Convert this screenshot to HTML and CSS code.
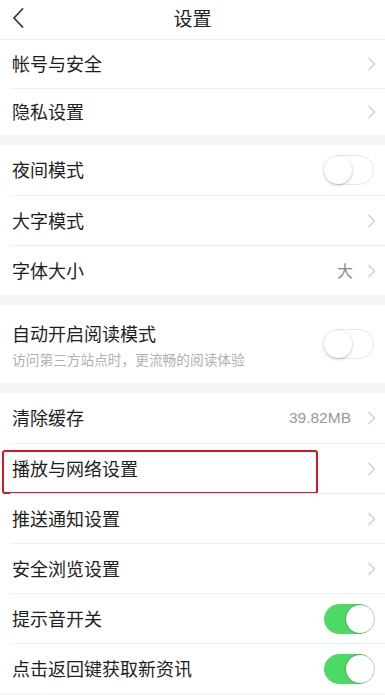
FILE: index.html
```html
<!DOCTYPE html>
<html lang="zh-CN">
<head>
<meta charset="utf-8">
<title>设置</title>
<link rel="stylesheet" href="styles.css">
</head>
<body>
<div class="page">
  <header class="header">
    <span class="back">
      <svg width="12" height="20" viewBox="0 0 12 20"><path d="M10.5 1 L2 10 L10.5 19" fill="none" stroke="#333" stroke-width="1.8" stroke-linecap="round" stroke-linejoin="round"/></svg>
    </span>
    <h1 class="title">设置</h1>
    <span></span>
  </header>

  <section class="group">
    <div class="row row-short"><span class="label">帐号与安全</span><span class="chev"><svg width="9" height="14" viewBox="0 0 9 14"><path d="M1.5 1 L7.5 7 L1.5 13" fill="none" stroke="#cdcdcd" stroke-width="1.3"/></svg></span></div>
    <div class="row row-short"><span class="label">隐私设置</span><span class="chev"><svg width="9" height="14" viewBox="0 0 9 14"><path d="M1.5 1 L7.5 7 L1.5 13" fill="none" stroke="#cdcdcd" stroke-width="1.3"/></svg></span></div>
  </section>

  <section class="group">
    <div class="row"><span class="label">夜间模式</span><span class="switch"><span class="knob"></span></span></div>
    <div class="row"><span class="label">大字模式</span><span class="chev"><svg width="9" height="14" viewBox="0 0 9 14"><path d="M1.5 1 L7.5 7 L1.5 13" fill="none" stroke="#cdcdcd" stroke-width="1.3"/></svg></span></div>
    <div class="row"><span class="label">字体大小</span><span class="value value-cn">大</span><span class="chev"><svg width="9" height="14" viewBox="0 0 9 14"><path d="M1.5 1 L7.5 7 L1.5 13" fill="none" stroke="#cdcdcd" stroke-width="1.3"/></svg></span></div>
  </section>

  <section class="group">
    <div class="row row-tall">
      <div class="labels">
        <span class="label">自动开启阅读模式</span>
        <span class="sub">访问第三方站点时，更流畅的阅读体验</span>
      </div>
      <span class="switch"><span class="knob"></span></span>
    </div>
  </section>

  <section class="group">
    <div class="row"><span class="label">清除缓存</span><span class="value">39.82MB</span><span class="chev"><svg width="9" height="14" viewBox="0 0 9 14"><path d="M1.5 1 L7.5 7 L1.5 13" fill="none" stroke="#cdcdcd" stroke-width="1.3"/></svg></span></div>
    <div class="row marked"><span class="label">播放与网络设置</span><span class="chev"><svg width="9" height="14" viewBox="0 0 9 14"><path d="M1.5 1 L7.5 7 L1.5 13" fill="none" stroke="#cdcdcd" stroke-width="1.3"/></svg></span><span class="highlight"></span></div>
    <div class="row"><span class="label">推送通知设置</span><span class="chev"><svg width="9" height="14" viewBox="0 0 9 14"><path d="M1.5 1 L7.5 7 L1.5 13" fill="none" stroke="#cdcdcd" stroke-width="1.3"/></svg></span></div>
    <div class="row"><span class="label">安全浏览设置</span><span class="chev"><svg width="9" height="14" viewBox="0 0 9 14"><path d="M1.5 1 L7.5 7 L1.5 13" fill="none" stroke="#cdcdcd" stroke-width="1.3"/></svg></span></div>
    <div class="row"><span class="label">提示音开关</span><span class="switch on"><span class="knob"></span></span></div>
    <div class="row"><span class="label">点击返回键获取新资讯</span><span class="switch on"><span class="knob"></span></span></div>
  </section>
</div>
</body>
</html>
```

FILE: styles.css
```css
html, body {
  margin: 0;
  padding: 0;
}
body {
  background: #f5f5f5;
  font-family: "Noto Sans CJK SC", "Liberation Sans", sans-serif;
  color: #222;
}
.page {
  width: 385px;
  height: 695px;
  overflow: hidden;
  display: flex;
  flex-direction: column;
  gap: 10px;
}
.header {
  height: 40px;
  box-sizing: border-box;
  background: #fff;
  border-bottom: 1px solid #ececec;
  display: grid;
  grid-template-columns: 1fr auto 1fr;
  align-items: center;
  margin-bottom: -10px;
}
.back {
  display: flex;
  align-items: center;
  padding-left: 12px;
  padding-bottom: 3px;
}
.title {
  margin: 0;
  font-size: 19px;
  font-weight: 400;
  line-height: 1;
  color: #222;
  padding-bottom: 4px;
}
.group {
  background: #fff;
  display: flex;
  flex-direction: column;
}
.row {
  position: relative;
  height: 50px;
  box-sizing: border-box;
  margin-left: 10px;
  padding: 0 9px 0 2px;
  display: flex;
  align-items: center;
}
.row + .row {
  border-top: 1px solid #efefef;
}
.row-short {
  height: 47.5px;
}
.row-tall {
  height: 78px;
}
.label {
  font-size: 18px;
  line-height: 1;
  color: #1e1e1e;
  flex: 1;
  padding-bottom: 2px;
}
.labels {
  flex: 1;
  display: flex;
  flex-direction: column;
  gap: 9px;
  padding-top: 2px;
}
.sub {
  font-size: 13.7px;
  line-height: 1;
  color: #b0b0b0;
}
.value {
  font-family: "Liberation Sans", "Noto Sans CJK SC", sans-serif;
  font-size: 15.5px;
  color: #999;
  margin-right: 16px;
}
.value-cn {
  font-family: "Noto Sans CJK SC", sans-serif;
  font-size: 16px;
  line-height: 1;
  color: #8a8a8a;
  margin-right: 14px;
  padding-bottom: 2px;
}
.chev {
  display: flex;
  align-items: center;
  margin-right: 0;
}
.switch {
  width: 50px;
  height: 30px;
  box-sizing: border-box;
  border-radius: 15px;
  border: 1.5px solid #e8e8e8;
  background: #fff;
  display: flex;
  align-items: center;
  justify-content: flex-start;
  margin-right: 2px;
}
.switch .knob {
  width: 28px;
  height: 28px;
  border-radius: 50%;
  background: #fff;
  box-shadow: 0 1px 3px rgba(0, 0, 0, 0.28);
  margin-left: -1px;
}
.switch.on {
  background: #4cd964;
  border-color: #4cd964;
  justify-content: flex-end;
}
.switch.on .knob {
  margin-left: 0;
  margin-right: -1px;
  box-shadow: 0 0 0 1px rgba(0, 0, 0, 0.18);
}
.highlight {
  position: absolute;
  left: -8px;
  top: 6px;
  width: 316px;
  height: 44px;
  box-sizing: border-box;
  border: 2.5px solid #d11a22;
  border-radius: 3px;
  pointer-events: none;
}
```
